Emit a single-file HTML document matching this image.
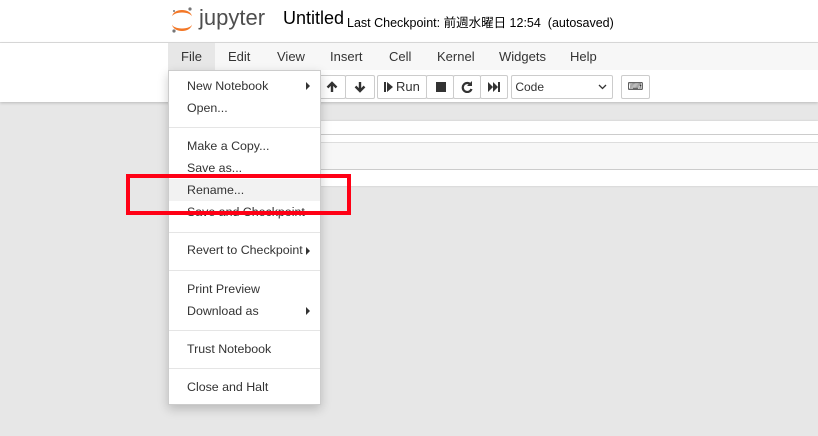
<!DOCTYPE html>
<html><head><style>
body{margin:0;width:818px;height:436px;overflow:hidden;background:#e7e7e7;font-family:"Liberation Sans","Noto Sans CJK JP",sans-serif;position:relative;color:#333}
.a{position:absolute}
.hdr{left:0;top:0;width:818px;height:42px;background:#fff;border-bottom:1px solid #ddd}
.tb{left:0;top:43px;width:818px;height:59px;background:#fff;box-shadow:0 1px 3px rgba(0,0,0,.2)}
.mb{left:168px;top:43px;width:650px;height:27px;background:#f7f7f7}
.mi{top:49px;font-size:13px;color:#333}
.btn{top:75px;height:22px;border:1px solid #ccc;background:#fff;border-radius:2px}
.menu{left:168px;top:70px;width:151px;height:333px;background:#fff;border:1px solid #ccc;box-shadow:0 4px 10px rgba(0,0,0,.2)}
.it{left:187px;font-size:12.4px;color:#333}
.dv{left:169px;width:151px;height:1px;background:#e5e5e5}
.ar{left:306px;width:0;height:0;border-top:4px solid transparent;border-bottom:4px solid transparent;border-left:4px solid #333}
</style></head><body>
<div class="a hdr"></div>
<svg class="a" style="left:170px;top:6px" width="24" height="28" viewBox="0 0 24 28">
<path d="M2 11 A10 7 0 0 1 22 11 A10 4.5 0 0 0 2 11Z" fill="#f37726"/>
<path d="M2 18 A10 7 0 0 0 22 18 A10 4.5 0 0 1 2 18Z" fill="#f37726"/>
<circle cx="20" cy="3" r="1.6" fill="#767677"/><circle cx="4" cy="25" r="1.6" fill="#767677"/><circle cx="4" cy="5" r="1" fill="#767677"/>
</svg>
<div class="a" style="left:199px;top:5px;font-size:22px;color:#4e4e4e">jupyter</div>
<div class="a" style="left:283px;top:8px;font-size:18px;color:#000">Untitled</div>
<div class="a" style="left:347px;top:12px;font-size:12.5px;color:#000">Last Checkpoint: 前週水曜日 12:54 &nbsp;(autosaved)</div>
<div class="a tb"></div>
<div class="a mb"></div>
<div class="a" style="left:168px;top:43px;width:47px;height:27px;background:#e7e7e7"></div>
<div class="a mi" style="left:181px">File</div>
<div class="a mi" style="left:228px">Edit</div>
<div class="a mi" style="left:277px">View</div>
<div class="a mi" style="left:330px">Insert</div>
<div class="a mi" style="left:389px">Cell</div>
<div class="a mi" style="left:437px">Kernel</div>
<div class="a mi" style="left:499px">Widgets</div>
<div class="a mi" style="left:570px">Help</div>
<div class="a btn" style="left:318px;width:26px"><svg class="a" style="left:7px;top:5px" width="12" height="12" viewBox="0 0 12 12"><path d="M6 11V2M1.5 6.5L6 2l4.5 4.5" stroke="#333" stroke-width="2.4" fill="none"/></svg></div>
<div class="a btn" style="left:345px;width:28px"><svg class="a" style="left:8px;top:5px" width="12" height="12" viewBox="0 0 12 12"><path d="M6 1v9M1.5 5.5L6 10l4.5-4.5" stroke="#333" stroke-width="2.4" fill="none"/></svg></div>
<div class="a btn" style="left:377px;width:48px;font-size:13px;line-height:22px"><svg class="a" style="left:6px;top:6px" width="10" height="10" viewBox="0 0 10 10"><path d="M0 0h2v10H0zM3 0l6 5-6 5z" fill="#333"/></svg><span class="a" style="left:18px">Run</span></div>
<div class="a btn" style="left:426px;width:26px"><div class="a" style="left:9px;top:6px;width:10px;height:10px;background:#333"></div></div>
<div class="a btn" style="left:453px;width:26px"><svg class="a" style="left:7px;top:5px" width="12" height="12" viewBox="0 0 12 12"><path d="M10 4A4.5 4.5 0 1 0 10.5 8" stroke="#333" stroke-width="2.2" fill="none"/><path d="M11 0v5H6z" fill="#333"/></svg></div>
<div class="a btn" style="left:480px;width:26px"><svg class="a" style="left:7px;top:6px" width="12" height="10" viewBox="0 0 12 10"><path d="M0 0l5 5-5 5zM5 0l5 5-5 5zM10 0h2v10h-2z" fill="#333"/></svg></div>
<div class="a btn" style="left:511px;width:100px;font-size:12px;line-height:22px">&nbsp;Code<svg class="a" style="left:86px;top:8px" width="9" height="6" viewBox="0 0 9 6"><path d="M1 1l3.5 3.5L8 1" stroke="#333" stroke-width="1.3" fill="none"/></svg></div>
<div class="a btn" style="left:621px;width:27px;text-align:center;font-size:11px;line-height:22px">⌨</div>
<div class="a" style="left:320px;top:121px;width:498px;height:65px;background:#fff;box-shadow:0 0 2px rgba(0,0,0,.15)"></div>
<div class="a" style="left:320px;top:134px;width:498px;height:1px;background:#ccc"></div>
<div class="a" style="left:320px;top:142px;width:498px;height:26px;background:#f7f7f7;border-top:1px solid #ddd;border-bottom:1px solid #ccc"></div>
<div class="a menu"></div>
<div class="a" style="left:169px;top:179px;width:151px;height:22px;background:#f2f2f2"></div>
<div class="a it" style="top:79px">New Notebook</div><div class="a ar" style="top:82px"></div>
<div class="a it" style="top:101px">Open...</div>
<div class="a dv" style="top:127px"></div>
<div class="a it" style="top:139px">Make a Copy...</div>
<div class="a it" style="top:161px">Save as...</div>
<div class="a it" style="top:183px">Rename...</div>
<div class="a it" style="top:205px">Save and Checkpoint</div>
<div class="a dv" style="top:232px"></div>
<div class="a it" style="top:243px">Revert to Checkpoint</div><div class="a ar" style="top:247px"></div>
<div class="a dv" style="top:270px"></div>
<div class="a it" style="top:282px">Print Preview</div>
<div class="a it" style="top:304px">Download as</div><div class="a ar" style="top:307px"></div>
<div class="a dv" style="top:330px"></div>
<div class="a it" style="top:342px">Trust Notebook</div>
<div class="a dv" style="top:368px"></div>
<div class="a it" style="top:380px">Close and Halt</div>
<div class="a" style="left:126px;top:174px;width:217px;height:33px;border:4px solid #ff0015"></div>
</body></html>
